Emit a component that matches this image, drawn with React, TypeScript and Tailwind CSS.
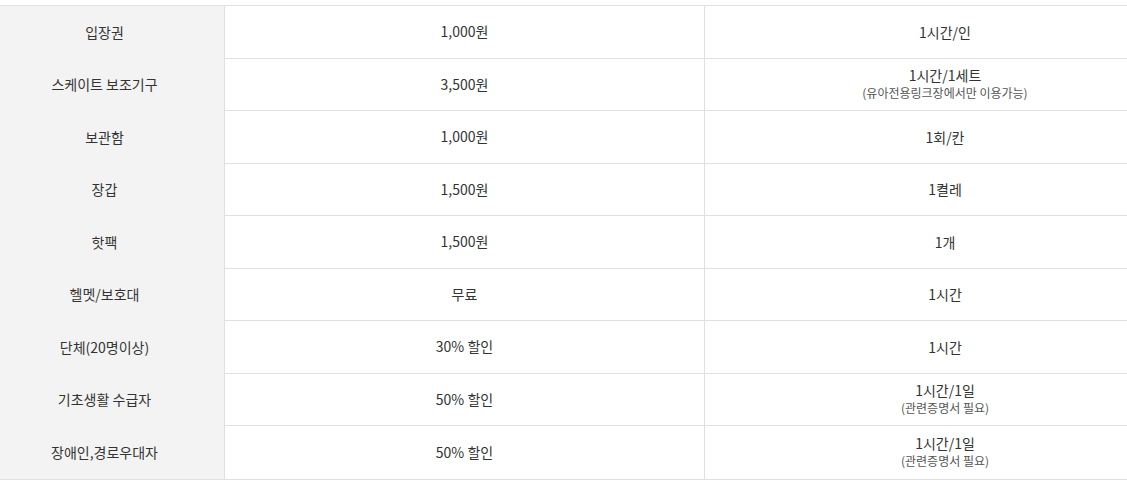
const rows: { name: string; price: string; unit: string; note?: string }[] = [
  { name: '입장권', price: '1,000원', unit: '1시간/인' },
  { name: '스케이트 보조기구', price: '3,500원', unit: '1시간/1세트', note: '(유아전용링크장에서만 이용가능)' },
  { name: '보관함', price: '1,000원', unit: '1회/칸' },
  { name: '장갑', price: '1,500원', unit: '1켤레' },
  { name: '핫팩', price: '1,500원', unit: '1개' },
  { name: '헬멧/보호대', price: '무료', unit: '1시간' },
  { name: '단체(20명이상)', price: '30% 할인', unit: '1시간' },
  { name: '기초생활 수급자', price: '50% 할인', unit: '1시간/1일', note: '(관련증명서 필요)' },
  { name: '장애인,경로우대자', price: '50% 할인', unit: '1시간/1일', note: '(관련증명서 필요)' },
];

export default function App() {
  return (
    <div className="w-[1127px] h-[488px] bg-white pt-[5px] overflow-hidden" style={{ fontFamily: '"Noto Sans CJK KR", "Noto Sans", sans-serif' }}>
      {/* table is wider than the view, scrolled a bit to the left */}
      <div className="w-[1200px] -ml-[15px] border-t border-b border-[#e0e0e0] text-[14px] text-[#333]">
        {rows.map((r, i) => (
          <div key={i} className="grid grid-cols-[240px_480px_1fr] h-[52.5px]">
            <div className="bg-[#f3f3f3] border-r border-[#e0e0e0] flex items-center justify-center">
              {r.name}
            </div>
            <div className={`flex items-center justify-center border-r border-[#e0e0e0] ${i < rows.length - 1 ? 'border-b' : ''}`}>
              {r.price}
            </div>
            <div className={`flex flex-col items-center justify-center border-[#e0e0e0] leading-[18px] ${i < rows.length - 1 ? 'border-b' : ''}`}>
              <span>{r.unit}</span>
              {r.note && <span className="text-[12px] text-[#555]">{r.note}</span>}
            </div>
          </div>
        ))}
      </div>
    </div>
  );
}
